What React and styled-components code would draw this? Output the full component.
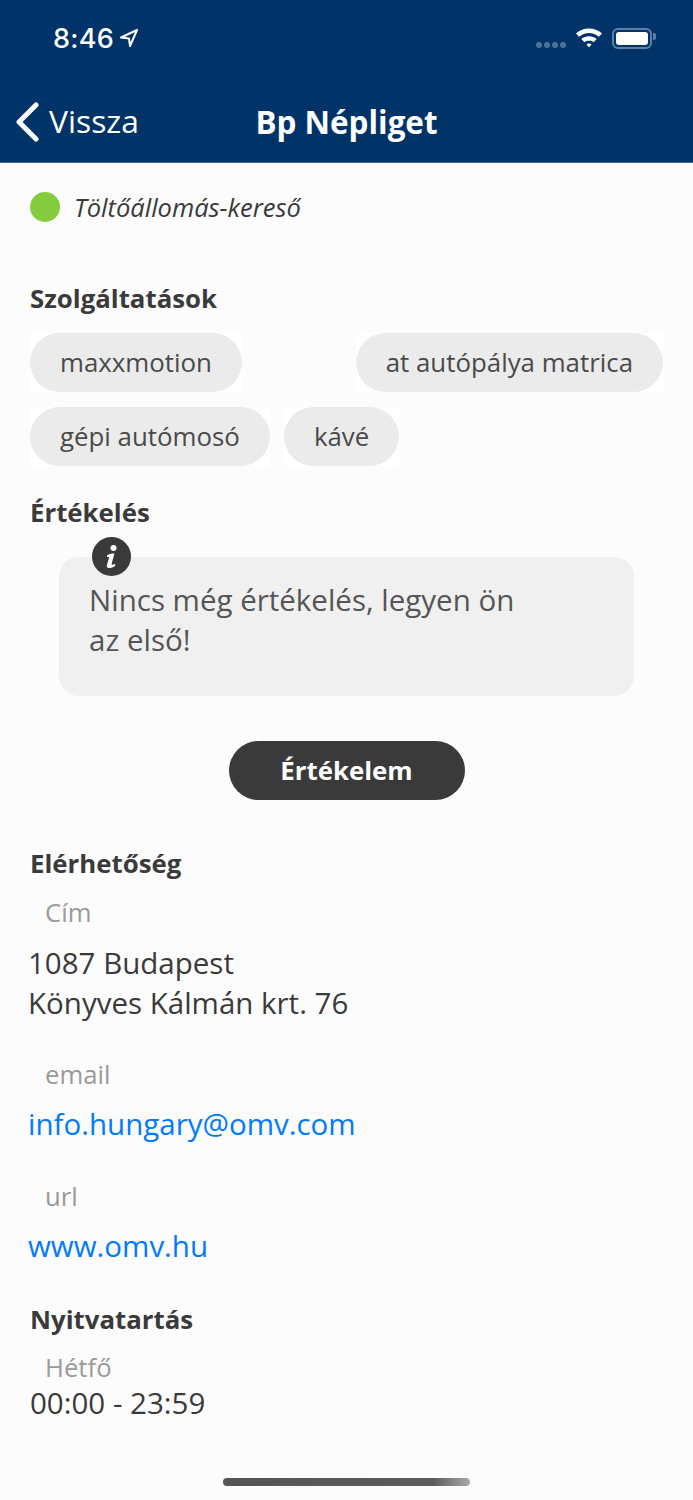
import React from 'react';
import styled, { createGlobalStyle } from 'styled-components';

const GlobalStyle = createGlobalStyle`
  html, body {
    margin: 0;
    padding: 0;
    background: #fcfcfc;
  }
  * {
    box-sizing: border-box;
  }
`;

const App = () => {
  return (
    <Page>
      <GlobalStyle />
      <Header>
        <StatusBar>
          <Clock>
            8:46
            <svg width="20" height="20" viewBox="0 0 20 20">
              <path d="M18 2 L2 9.5 L10 10.5 L11 18 Z" fill="none" stroke="#fff" strokeWidth="2" strokeLinejoin="round" />
            </svg>
          </Clock>
          <StatusIcons>
            <Signal>
              {[...Array(4)].map((_, index) => (
                <SignalDot key={index} />
              ))}
            </Signal>
            <svg width="26" height="20" viewBox="1.5 2.5 25 18.5">
              <path d="M1.5 7.5 C8.5 1 19.5 1 26.5 7.5 L23.6 10.6 C18 5.6 10 5.6 4.4 10.6 Z" fill="#fff" />
              <path d="M6.6 12.7 C10.8 9.2 17.2 9.2 21.4 12.7 L18.4 15.8 C15.8 13.9 12.2 13.9 9.6 15.8 Z" fill="#fff" />
              <path d="M11.6 17.9 C13 16.9 15 16.9 16.4 17.9 L14 20.7 Z" fill="#fff" />
            </svg>
            <Battery>
              <BatteryFill />
              <BatteryCap />
            </Battery>
          </StatusIcons>
        </StatusBar>
        <NavBar>
          <BackButton>
            <svg width="26" height="40" viewBox="0 0 26 40">
              <path d="M22 3 L5 20 L22 37" fill="none" stroke="#fff" strokeWidth="5" strokeLinecap="round" strokeLinejoin="round" />
            </svg>
            <BackLabel>Vissza</BackLabel>
          </BackButton>
          <NavTitle>Bp Népliget</NavTitle>
        </NavBar>
      </Header>
      <Content>
        <StationRow>
          <StatusDot />
          <StationName>Töltőállomás-kereső</StationName>
        </StationRow>

        <ServicesTitle>Szolgáltatások</ServicesTitle>
        <ChipRow $spread>
          <ChipBox><Chip>maxxmotion</Chip></ChipBox>
          <ChipBox><Chip>at autópálya matrica</Chip></ChipBox>
        </ChipRow>
        <ChipRow>
          <ChipBox><Chip>gépi autómosó</Chip></ChipBox>
          <ChipBox><Chip>kávé</Chip></ChipBox>
        </ChipRow>

        <RatingTitle>Értékelés</RatingTitle>
        <Notice>
          <InfoBadge>
            <svg width="16" height="26" viewBox="0 0 16 26">
              <circle cx="9.5" cy="4" r="3" fill="#fff" />
              <path d="M3 11.5 C5 10 8 9.4 10.4 9.6 L7.6 20 C7.4 21 8.4 21.2 11 19.8 L11.4 21.4 C9 23.4 6.4 24.2 4.6 24 C3 23.8 2.6 22.6 3 21 L5.2 13 L3.2 13 Z" fill="#fff" />
            </svg>
          </InfoBadge>
          <NoticeText>Nincs még értékelés, legyen ön az első!</NoticeText>
        </Notice>
        <RateRow>
          <RateButton>Értékelem</RateButton>
        </RateRow>

        <ContactTitle>Elérhetőség</ContactTitle>
        <FieldLabel>Cím</FieldLabel>
        <AddressValue>1087 Budapest<br />Könyves Kálmán krt. 76</AddressValue>
        <FieldLabel $gap={35}>email</FieldLabel>
        <LinkValue>info.hungary@omv.com</LinkValue>
        <FieldLabel $gap={36}>url</FieldLabel>
        <LinkValue>www.omv.hu</LinkValue>

        <HoursTitle>Nyitvatartás</HoursTitle>
        <FieldLabel $gap={15}>Hétfő</FieldLabel>
        <HoursValue>00:00 - 23:59</HoursValue>
      </Content>
      <HomeIndicator />
    </Page>
  );
};

const Page = styled.div`
  position: relative;
  width: 693px;
  height: 1500px;
  overflow: hidden;
  background: #fcfcfc;
  color: #3a3a3a;
  font-family: "Open Sans", "Liberation Sans", sans-serif;
`;

const Header = styled.header`
  height: 163px;
  background: #003468;
  color: #fff;
  border-bottom: 1px solid #3f6690;
`;

const StatusBar = styled.div`
  display: flex;
  align-items: center;
  justify-content: space-between;
  height: 76px;
  padding: 0 41px 0 53px;
`;

const Clock = styled.div`
  display: flex;
  align-items: center;
  gap: 5px;
  font-family: Inter, "Liberation Sans", sans-serif;
  font-size: 27px;
  font-weight: 500;
  letter-spacing: 0.3px;
`;

const StatusIcons = styled.div`
  display: flex;
  align-items: center;
  gap: 10px;
`;

const Signal = styled.div`
  display: flex;
  gap: 2px;
  margin-top: 14px;
`;

const SignalDot = styled.span`
  width: 6px;
  height: 6px;
  border-radius: 50%;
  background: #4f7097;
`;

const Battery = styled.div`
  position: relative;
  width: 40px;
  height: 21px;
  padding: 2px;
  border: 2px solid #5f80a6;
  border-radius: 6px;
`;

const BatteryFill = styled.div`
  height: 100%;
  background: #fff;
  border-radius: 3px;
`;

const BatteryCap = styled.span`
  position: absolute;
  top: 3px;
  right: -6px;
  width: 3px;
  height: 7px;
  background: #5f80a6;
  border-radius: 0 2px 2px 0;
`;

const NavBar = styled.div`
  position: relative;
  display: flex;
  align-items: center;
  justify-content: center;
  height: 86px;
  padding-top: 4px;
`;

const BackButton = styled.div`
  position: absolute;
  left: 14px;
  top: 26px;
  display: flex;
  align-items: center;
  gap: 9px;
`;

const BackLabel = styled.span`
  font-size: 31.8px;
  line-height: 38px;
  margin-bottom: 2px;
`;

const NavTitle = styled.h1`
  margin: 0;
  font-size: 31.4px;
  font-weight: 700;
`;

const Content = styled.main`
  display: flex;
  flex-direction: column;
  padding: 0 30px;
`;

const StationRow = styled.div`
  display: flex;
  align-items: center;
  gap: 14px;
  margin-top: 29px;
  height: 30px;
`;

const StatusDot = styled.span`
  width: 30px;
  height: 30px;
  border-radius: 50%;
  background: #84cc3e;
`;

const StationName = styled.span`
  font-size: 25.5px;
  font-style: italic;
`;

const SectionTitle = styled.h2`
  margin: 0;
  font-size: 25.8px;
  line-height: 34px;
  font-weight: 700;
`;

const ServicesTitle = styled(SectionTitle)`
  margin-top: 59px;
`;

const ChipRow = styled.div`
  display: flex;
  gap: 14px;
  justify-content: ${props => (props.$spread ? 'space-between' : 'flex-start')};
  margin-top: ${props => (props.$spread ? 18 : 15)}px;
`;

const ChipBox = styled.div`
  background: #fff;
`;

const Chip = styled.div`
  height: 59px;
  padding: 0 30px;
  border-radius: 30px;
  background: #ebebeb;
  color: #4a4a4a;
  font-size: 25.85px;
  line-height: 59px;
`;

const RatingTitle = styled(SectionTitle)`
  margin-top: 29px;
`;

const Notice = styled.div`
  position: relative;
  width: 575px;
  height: 139px;
  margin: 28px 0 0 29px;
  padding: 23px 110px 0 30px;
  border-radius: 20px;
  background: #f0f0f0;
`;

const InfoBadge = styled.span`
  position: absolute;
  left: 33px;
  top: -20px;
  display: flex;
  align-items: center;
  justify-content: center;
  width: 39px;
  height: 39px;
  border-radius: 50%;
  background: #3a3a3a;
`;

const NoticeText = styled.div`
  color: #555;
  font-size: 29.5px;
  line-height: 40px;
`;

const RateRow = styled.div`
  display: flex;
  justify-content: center;
  margin-top: 45px;
`;

const RateButton = styled.div`
  width: 236px;
  height: 59px;
  border-radius: 30px;
  background: #3a3a3a;
  color: #fff;
  font-size: 25.8px;
  font-weight: 700;
  line-height: 59px;
  text-align: center;
`;

const ContactTitle = styled(SectionTitle)`
  margin-top: 46px;
`;

const FieldLabel = styled.div`
  margin: ${props => props.$gap || 16}px 0 0 15px;
  color: #9a9a9a;
  font-size: 25.7px;
  line-height: 34px;
`;

const AddressValue = styled.div`
  margin: 13px 0 0 -2px;
  font-size: 29.5px;
  line-height: 40px;
`;

const LinkValue = styled.div`
  margin: 11px 0 0 -2px;
  color: #007aff;
  font-size: 29.5px;
  line-height: 41px;
`;

const HoursTitle = styled(SectionTitle)`
  margin-top: 36px;
`;

const HoursValue = styled.div`
  font-size: 29.5px;
  line-height: 36px;
`;

const HomeIndicator = styled.div`
  position: absolute;
  left: 223px;
  top: 1478px;
  width: 247px;
  height: 8px;
  border-radius: 4px;
  background: linear-gradient(90deg, #555 0%, #5c5c5c 85%, #aaa 100%);
`;

export default App;
